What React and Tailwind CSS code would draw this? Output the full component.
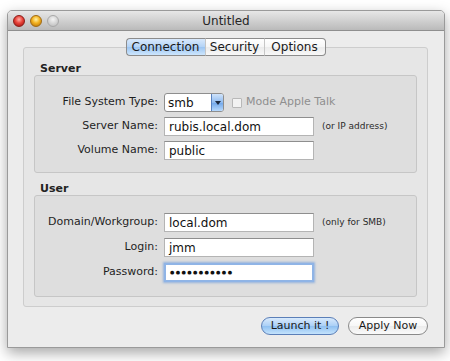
export default function App() {
  const Light = ({ color }) => {
    const styles = {
      red: "bg-[radial-gradient(circle_at_50%_35%,#ffb0a8_0%,#e8433a_45%,#9c0f0c_100%)] border-[#8a1c17]",
      yellow: "bg-[radial-gradient(circle_at_50%_35%,#fff2a8_0%,#f3b21f_45%,#b06a07_100%)] border-[#a06a12]",
      gray: "bg-[radial-gradient(circle_at_50%_35%,#f4f4f4_0%,#d2d2d2_55%,#b8b8b8_100%)] border-[#a8a8a8]",
    };
    return <div className={`w-[12px] h-[12px] rounded-full border ${styles[color]}`} />;
  };

  const Tab = ({ label, active, first, last }) => (
    <div
      className={`h-[18px] flex items-center justify-center text-[12px] leading-none text-[#1a1a1a] border-y border-[#8c8c8c] ${
        first ? "w-[79px] border-l rounded-l-[4px]" : ""
      } ${last ? "w-[61px] border-r rounded-r-[4px]" : ""} ${
        !first && !last ? "w-[60px] border-l border-r border-l-[#c6c6c6] border-r-[#c6c6c6]" : ""
      } ${
        active
          ? "bg-[linear-gradient(#d9e9fc_0%,#b3d3f6_50%,#9cc5f2_51%,#cde6fd_100%)]"
          : "bg-[linear-gradient(#ffffff_0%,#f6f6f6_50%,#ebebeb_51%,#f8f8f8_100%)]"
      }`}
    >
      {label}
    </div>
  );

  const Label = ({ children }) => (
    <div className="w-[123px] text-right text-[11px] text-[#1e1e1e] shrink-0">{children}</div>
  );

  const Field = ({ children, focus }) => (
    <div
      className={`ml-[6px] w-[150px] h-[19px] bg-white flex items-center pl-[4px] text-[12px] text-[#111] ${
        focus
          ? "border-2 border-[#8fb4e6] shadow-[0_0_2px_1px_rgba(100,150,220,0.6)] pl-[3px]"
          : "border border-[#b4b4b4] border-t-[#8e8e8e]"
      }`}
    >
      {children}
    </div>
  );

  const Hint = ({ children }) => (
    <div className="ml-[8px] text-[9px] text-[#2a2a2a]">{children}</div>
  );

  return (
    <div className="w-[450px] h-[361px] bg-white pl-[7px] pt-[10px] font-['DejaVu_Sans',sans-serif]">
      <div className="w-[438px] h-[338px] bg-[#ececec] border border-[#9a9a9a] rounded-t-[5px] shadow-[0_5px_14px_rgba(0,0,0,0.35)] flex flex-col overflow-hidden">
        {/* title bar */}
        <div className="h-[20px] grid grid-cols-[70px_1fr_70px] items-center bg-[linear-gradient(#e7e7e7,#bababa)] border-b border-[#8f8f8f]">
          <div className="flex items-center gap-[5px] pl-[5px]">
            <Light color="red" />
            <Light color="yellow" />
            <Light color="gray" />
          </div>
          <div className="text-center text-[12px] text-[#262626]">Untitled</div>
          <div />
        </div>

        <div className="pl-[15px] pr-[16px] pt-[7px]">
          <div className="flex justify-center -mb-[9px] relative z-10">
            <Tab label="Connection" active first />
            <Tab label="Security" />
            <Tab label="Options" last />
          </div>

          <div className="bg-[#e6e6e6] border border-[#cdcdcd] rounded-[3px] pt-[14px] px-[10px] pb-[9px]">
            <div className="h-[13px] leading-[13px] pl-[6px] text-[11px] font-bold text-[#222]">Server</div>
            <div className="bg-[#dedede] border border-[#c6c6c6] rounded-[3px] pt-[17px] pb-[12px] flex flex-col gap-[5px]">
              <div className="flex items-center h-[19px]">
                <Label>File System Type:</Label>
                <div className="ml-[6px] w-[60px] h-[19px] flex border border-[#8e8e8e] rounded-[3px] overflow-hidden bg-white">
                  <div className="flex-1 flex items-center pl-[3px] text-[12px] text-[#111]">smb</div>
                  <div className="w-[12px] flex items-center justify-center bg-[linear-gradient(#cfe3fb_0%,#8fbbf0_50%,#6fa6ea_51%,#b8dafd_100%)] border-l border-[#5a83c0]">
                    <div className="w-0 h-0 border-l-[3px] border-r-[3px] border-t-[4px] border-l-transparent border-r-transparent border-t-[#1c2a40]" />
                  </div>
                </div>
                <div className="ml-[8px] w-[10px] h-[10px] border border-[#b8b8b8] bg-[#f2f2f2] rounded-[1px]" />
                <div className="ml-[4px] text-[11px] text-[#8f8f8f]">Mode Apple Talk</div>
              </div>
              <div className="flex items-center h-[19px]">
                <Label>Server Name:</Label>
                <Field>rubis.local.dom</Field>
                <Hint>(or IP address)</Hint>
              </div>
              <div className="flex items-center h-[19px]">
                <Label>Volume Name:</Label>
                <Field>public</Field>
              </div>
            </div>

            <div className="mt-[9px] h-[13px] leading-[13px] pl-[6px] text-[11px] font-bold text-[#222]">User</div>
            <div className="bg-[#dedede] border border-[#c6c6c6] rounded-[3px] pt-[17px] pb-[14px] flex flex-col gap-[6px]">
              <div className="flex items-center h-[19px]">
                <Label>Domain/Workgroup:</Label>
                <Field>local.dom</Field>
                <Hint>(only for SMB)</Hint>
              </div>
              <div className="flex items-center h-[19px]">
                <Label>Login:</Label>
                <Field>jmm</Field>
              </div>
              <div className="flex items-center h-[19px]">
                <Label>Password:</Label>
                <Field focus>
                  <span className="text-[5px] tracking-[1.4px] text-[#111]">●●●●●●●●●●●</span>
                </Field>
              </div>
            </div>
          </div>

          <div className="flex justify-end gap-[9px] mt-[10px]">
            <div className="w-[78px] h-[18px] rounded-full border border-[#5b7fb8] bg-[linear-gradient(#d9eafc_0%,#aacff6_50%,#8fc0f1_51%,#c4e3fd_100%)] flex items-center justify-center text-[11px] text-[#1a1a1a]">
              Launch it !
            </div>
            <div className="w-[80px] h-[18px] rounded-full border border-[#8a8a8a] bg-[linear-gradient(#ffffff_0%,#f7f7f7_50%,#ececec_51%,#fafafa_100%)] flex items-center justify-center text-[11px] text-[#1a1a1a]">
              Apply Now
            </div>
          </div>
        </div>
      </div>
    </div>
  );
}
